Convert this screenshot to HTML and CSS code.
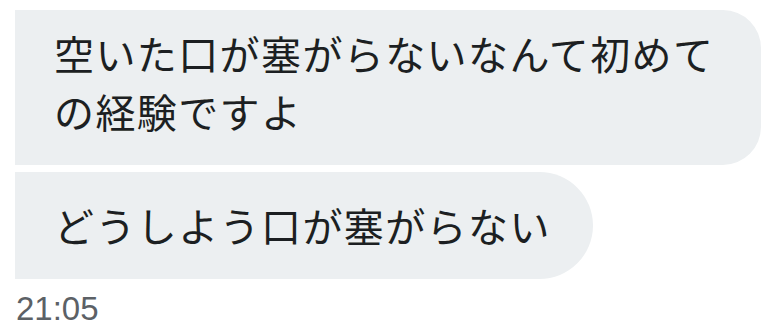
FILE: index.html
```html
<!DOCTYPE html>
<html lang="ja">
<head>
  <meta charset="UTF-8">
  <meta name="viewport" content="width=device-width, initial-scale=1.0">
  <title>DM</title>
  <link rel="stylesheet" href="styles.css">
</head>
<body>
  <div class="thread">
    <div class="bubble bubble-wide">空いた口が塞がらないなんて初めての経験ですよ</div>
    <div class="bubble bubble-short">どうしよう口が塞がらない</div>
    <div class="time">21:05</div>
  </div>
</body>
</html>
```

FILE: styles.css
```css
body {
  margin: 0;
  background: #fff;
  font-family: "Noto Sans CJK JP", "Noto Sans", sans-serif;
}
.thread {
  display: flex;
  flex-direction: column;
  align-items: flex-start;
  gap: 7px;
  padding: 10px 0 0 15px;
}
.bubble {
  background: #eceff1;
  color: #1c1f22;
  font-size: 40px;
  letter-spacing: 1.4px;
  line-height: 58px;
  border-radius: 0 38px 38px 0;
}
.bubble-wide {
  width: 667px;
  padding: 14px 40px 25px 39px;
}
.bubble-short {
  padding: 24px 42px 25px 39px;
  border-radius: 0 54px 54px 0;
}
.time {
  margin-top: 6px;
  font-family: "Liberation Sans", Arial, sans-serif;
  font-size: 33px;
  line-height: 33px;
  color: #5c6166;
  padding-left: 1px;
}
```
